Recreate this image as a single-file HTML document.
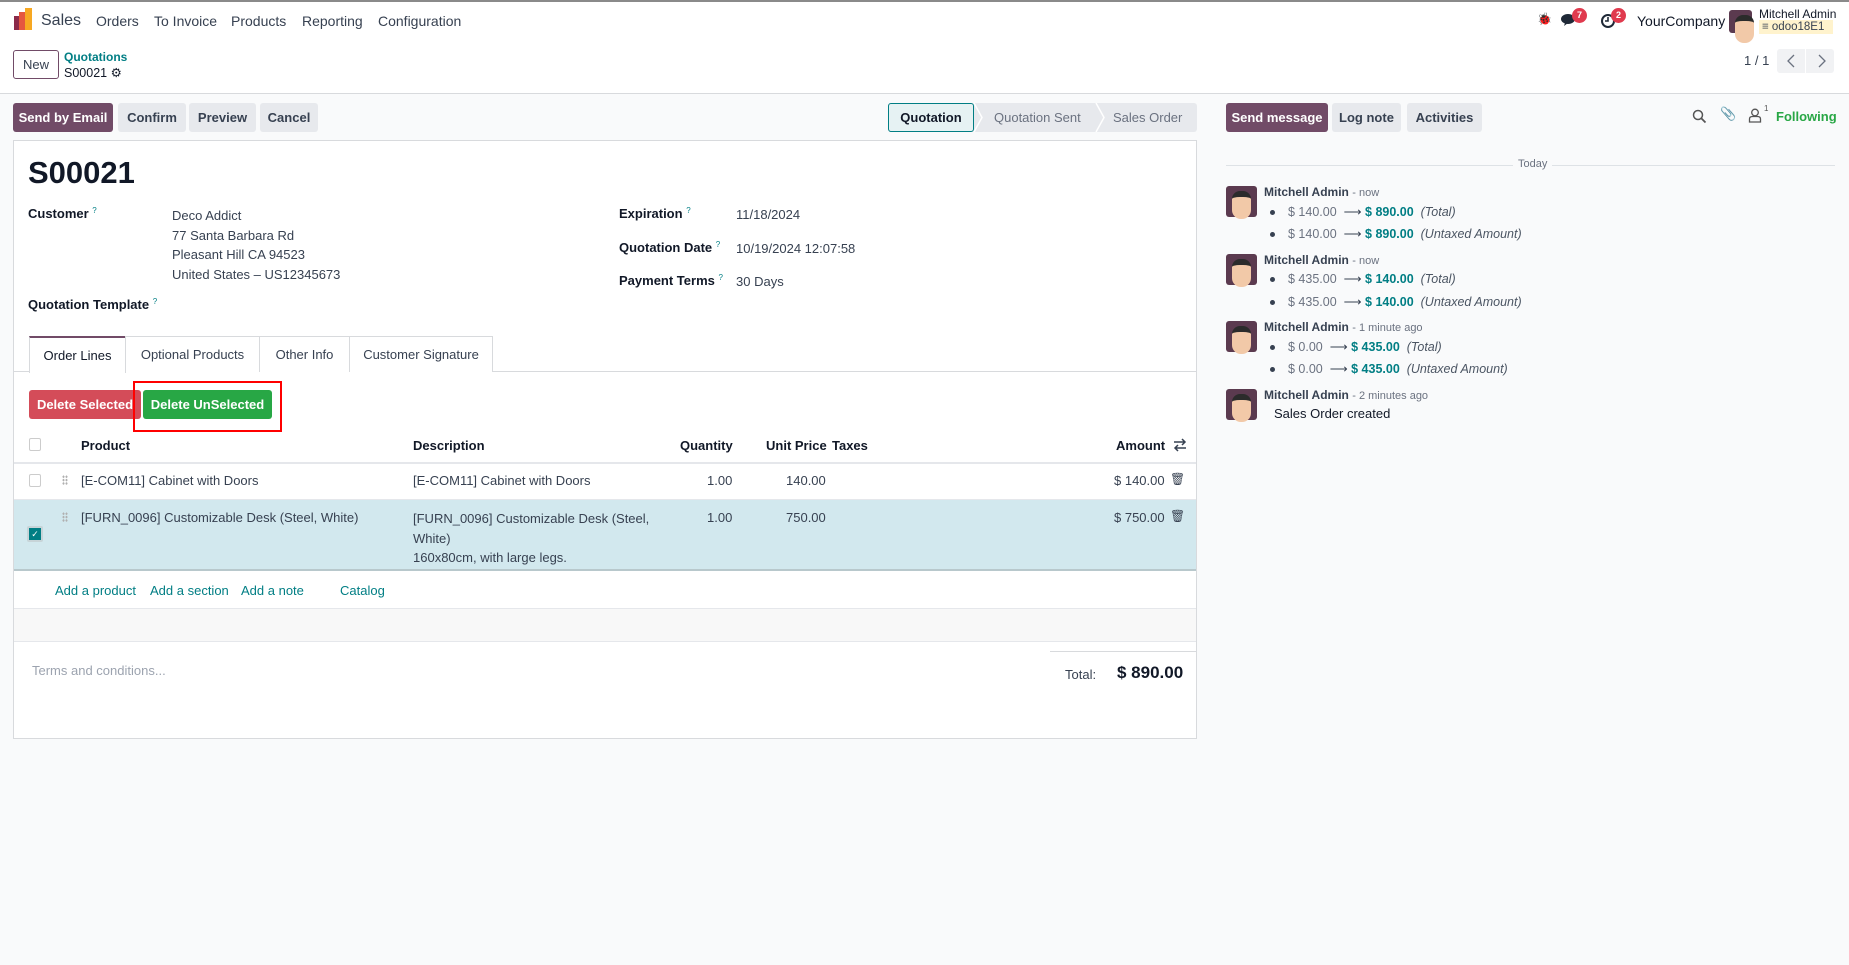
<!DOCTYPE html>
<html><head><meta charset="utf-8"><style>
*{box-sizing:border-box;margin:0;padding:0}
body{width:1849px;height:965px;position:relative;background:#f9fafb;font-family:"Liberation Sans",sans-serif;font-size:13px;color:#374151;overflow:hidden}
.a{position:absolute;white-space:nowrap}
.top{position:absolute;left:0;top:0;width:1849px;height:94px;background:#fff;border-top:2px solid #8a8a8a;border-bottom:1px solid #d8dadd}
.btn{position:absolute;height:29px;line-height:29px;border-radius:3px;background:#e7e9ed;color:#374151;font-weight:bold;text-align:center;font-size:13px}
.pri{background:#714b67;color:#fff}
.lbl{font-weight:bold;color:#111827}
.q{color:#017e84;font-size:8px;vertical-align:top;font-weight:normal}
.link{color:#017e84}
.sheet{position:absolute;left:13px;top:140px;width:1184px;height:599px;background:#fff;border:1px solid #d8dadd}
.tab{position:absolute;top:336px;height:36px;line-height:36px;border:1px solid #d8dadd;border-bottom:none;text-align:center;background:#fff}
.muted{color:#6b7280}
.teal{color:#017e84;font-weight:bold}
.it{font-style:italic;color:#4b5563}
.dot{position:absolute;width:5px;height:5px;border-radius:50%;background:#374151}
.av{position:absolute;left:1226px;width:31px;height:31px;border-radius:3px;background:#5b3a4f}
.av::after{content:"";position:absolute;left:6px;top:5px;width:19px;height:22px;border-radius:8px 8px 9px 9px;background:#f2c9a8;border-top:6px solid #2b2b2b}
.grip{position:absolute;width:6px;height:10px;background-image:radial-gradient(circle,#b0b0b0 1px,transparent 1.2px);background-size:3px 3.4px}
</style></head><body>
<div class="top"></div>
<div class="a" style="left:14px;top:16px;width:6px;height:14px;background:#8b2a4a"></div>
<div class="a" style="left:19px;top:12px;width:6px;height:18px;background:#e5573f"></div>
<div class="a" style="left:25px;top:8px;width:7px;height:22px;background:#f7a822"></div>
<div class="a" style="left:41px;top:12px;font-size:16px;color:#374151">Sales</div>
<div class="a" style="left:96px;top:13px;font-size:14px">Orders</div>
<div class="a" style="left:154px;top:13px;font-size:14px">To Invoice</div>
<div class="a" style="left:231px;top:13px;font-size:14px">Products</div>
<div class="a" style="left:302px;top:13px;font-size:14px">Reporting</div>
<div class="a" style="left:378px;top:13px;font-size:14px">Configuration</div>
<div class="a" style="left:1537px;top:12px;font-size:12px;color:#111">🐞</div>
<svg class="a" style="left:1561px;top:13px" width="16" height="14" viewBox="0 0 16 14"><ellipse cx="7" cy="6" rx="7" ry="5" fill="#1f2937"/><path d="M4 10 L3 13 L7 10Z" fill="#1f2937"/></svg>
<div class="a" style="left:1572px;top:8px;width:15px;height:15px;border-radius:50%;background:#e03a4e;color:#fff;font-size:9px;line-height:15px;text-align:center;font-weight:bold">7</div>
<svg class="a" style="left:1600px;top:13px" width="16" height="16" viewBox="0 0 16 16"><circle cx="8" cy="8" r="6" fill="none" stroke="#1f2937" stroke-width="2"/><path d="M8 4v4h-3" stroke="#1f2937" stroke-width="1.6" fill="none"/></svg>
<div class="a" style="left:1611px;top:8px;width:15px;height:15px;border-radius:50%;background:#e03a4e;color:#fff;font-size:9px;line-height:15px;text-align:center;font-weight:bold">2</div>
<div class="a" style="left:1637px;top:13px;font-size:14px;color:#111827">YourCompany</div>
<div class="av" style="left:1729px;top:10px;width:23px;height:23px"></div>
<div class="a" style="left:1759px;top:7px;font-size:12px;color:#111827">Mitchell Admin</div>
<div class="a" style="left:1759px;top:20px;width:74px;height:14px;background:#fff3cd;font-size:11.5px;line-height:14px;padding-left:3px">≡ odoo18E1</div>
<div class="a" style="left:13px;top:50px;width:46px;height:29px;border:1px solid #714b67;border-radius:3px;text-align:center;line-height:27px;font-size:13px">New</div>
<div class="a link" style="left:64px;top:50px;font-size:12px;font-weight:bold">Quotations</div>
<div class="a" style="left:64px;top:65px;font-size:12.5px;color:#111827">S00021 ⚙</div>
<div class="a" style="left:1744px;top:53px;font-size:13px">1 / 1</div>
<div class="a" style="left:1777px;top:49px;width:28px;height:24px;background:#f1f2f4;border-radius:3px 0 0 3px"></div>
<div class="a" style="left:1806px;top:49px;width:28px;height:24px;background:#f1f2f4;border-radius:0 3px 3px 0"></div>
<svg class="a" style="left:1785px;top:54px" width="44" height="14" viewBox="0 0 44 14"><path d="M9 1 L3 7 L9 13" stroke="#6b7280" fill="none" stroke-width="1.3"/><path d="M34 1 L40 7 L34 13" stroke="#6b7280" fill="none" stroke-width="1.3"/></svg>
<div class="btn pri" style="left:13px;top:103px;width:100px">Send by Email</div>
<div class="btn" style="left:118px;top:103px;width:68px">Confirm</div>
<div class="btn" style="left:189px;top:103px;width:67px">Preview</div>
<div class="btn" style="left:260px;top:103px;width:58px">Cancel</div>
<div class="a" style="left:888px;top:103px;width:309px;height:29px;background:#e7e9ed;border-radius:3px"></div>
<svg class="a" style="left:970px;top:103px" width="140" height="29" viewBox="0 0 140 29"><path d="M4 0 L12 14.5 L4 29" stroke="#fff" fill="none" stroke-width="1.5"/><path d="M126 0 L134 14.5 L126 29" stroke="#fff" fill="none" stroke-width="1.5"/></svg>
<div class="a" style="left:888px;top:103px;width:86px;height:29px;background:#e6f2f3;border:1px solid #017e84;border-radius:3px;text-align:center;line-height:27px;font-weight:bold;color:#111827">Quotation</div>
<div class="a muted" style="left:994px;top:110px">Quotation Sent</div>
<div class="a muted" style="left:1113px;top:110px">Sales Order</div>
<div class="btn pri" style="left:1226px;top:103px;width:102px">Send message</div>
<div class="btn" style="left:1332px;top:103px;width:69px">Log note</div>
<div class="btn" style="left:1407px;top:103px;width:75px">Activities</div>
<svg class="a" style="left:1692px;top:109px" width="15" height="15" viewBox="0 0 15 15"><circle cx="6" cy="6" r="4.5" fill="none" stroke="#555" stroke-width="1.5"/><path d="M9.5 9.5 L13.5 13.5" stroke="#555" stroke-width="1.8"/></svg>
<div class="a" style="left:1720px;top:106px;font-size:13px;color:#555">📎</div>
<svg class="a" style="left:1748px;top:108px" width="14" height="15" viewBox="0 0 14 15"><circle cx="7" cy="4.5" r="3.3" fill="none" stroke="#555" stroke-width="1.3"/><path d="M1.5 14 V11 Q1.5 8.5 4.5 8.5 H9.5 Q12.5 8.5 12.5 11 V14 Z" fill="none" stroke="#555" stroke-width="1.3"/></svg>
<div class="a" style="left:1764px;top:104px;font-size:8px;color:#555">1</div>
<div class="a" style="left:1776px;top:109px;color:#28a745;font-weight:bold">Following</div>
<div class="sheet"></div>
<div class="a" style="left:28px;top:155px;font-size:31px;font-weight:bold;color:#111827">S00021</div>
<div class="a lbl" style="left:28px;top:206px">Customer <span class="q">?</span></div>
<div class="a" style="left:172px;top:206px;line-height:19.5px">Deco Addict<br>77 Santa Barbara Rd<br>Pleasant Hill CA 94523<br>United States – US12345673</div>
<div class="a lbl" style="left:28px;top:297px">Quotation Template <span class="q">?</span></div>
<div class="a lbl" style="left:619px;top:206px">Expiration <span class="q">?</span></div>
<div class="a" style="left:736px;top:207px">11/18/2024</div>
<div class="a lbl" style="left:619px;top:240px">Quotation Date <span class="q">?</span></div>
<div class="a" style="left:736px;top:241px">10/19/2024 12:07:58</div>
<div class="a lbl" style="left:619px;top:273px">Payment Terms <span class="q">?</span></div>
<div class="a" style="left:736px;top:274px">30 Days</div>
<div class="a" style="left:14px;top:371px;width:1182px;height:1px;background:#d8dadd"></div>
<div class="tab" style="left:29px;width:97px;border-top:2px solid #714b67;height:37px;color:#111827">Order Lines</div>
<div class="tab" style="left:125px;width:135px">Optional Products</div>
<div class="tab" style="left:259px;width:91px">Other Info</div>
<div class="tab" style="left:349px;width:144px">Customer Signature</div>
<div class="btn" style="left:29px;top:390px;width:112px;background:#d44c59;color:#fff">Delete Selected</div>
<div class="btn" style="left:143px;top:390px;width:129px;background:#28a745;color:#fff">Delete UnSelected</div>
<div class="a" style="left:133px;top:381px;width:149px;height:51px;border:2px solid #ff0000"></div>
<div class="a" style="left:29px;top:438px;width:12px;height:13px;border:1px solid #ccc;border-radius:2px"></div>
<div class="a lbl" style="left:81px;top:438px">Product</div>
<div class="a lbl" style="left:413px;top:438px">Description</div>
<div class="a lbl" style="left:680px;top:438px">Quantity</div>
<div class="a lbl" style="left:766px;top:438px">Unit Price</div>
<div class="a lbl" style="left:832px;top:438px">Taxes</div>
<div class="a lbl" style="left:1116px;top:438px">Amount</div>
<svg class="a" style="left:1173px;top:438px" width="14" height="14" viewBox="0 0 14 14"><path d="M1 4 H12 M9 1 L12 4 L9 7 M13 10 H2 M5 7 L2 10 L5 13" stroke="#374151" fill="none" stroke-width="1.5"/></svg>
<div class="a" style="left:14px;top:462px;width:1182px;height:2px;background:#e5e7eb"></div>
<div class="a" style="left:29px;top:474px;width:12px;height:13px;border:1px solid #ccc;border-radius:2px"></div>
<div class="grip" style="left:62px;top:475px"></div>
<div class="a" style="left:81px;top:473px">[E-COM11] Cabinet with Doors</div>
<div class="a" style="left:413px;top:473px">[E-COM11] Cabinet with Doors</div>
<div class="a" style="left:707px;top:473px">1.00</div>
<div class="a" style="left:786px;top:473px">140.00</div>
<div class="a" style="left:1114px;top:473px">$ 140.00</div>
<div class="a" style="left:1170px;top:472px;font-size:12px">🗑</div>
<div class="a" style="left:14px;top:499px;width:1182px;height:1px;background:#e5e7eb"></div>
<div class="a" style="left:14px;top:500px;width:1182px;height:71px;background:#d2e8ee;border-bottom:2px solid #b8c8cc"></div>
<div class="a" style="left:27px;top:526px;width:16px;height:16px;background:#c7d4d8;border-radius:2px"></div>
<div class="a" style="left:29px;top:528px;width:12px;height:12px;background:#017e84;color:#fff;font-size:9px;line-height:12px;text-align:center">✓</div>
<div class="grip" style="left:62px;top:512px"></div>
<div class="a" style="left:81px;top:510px">[FURN_0096] Customizable Desk (Steel, White)</div>
<div class="a" style="left:413px;top:509px;line-height:19.5px">[FURN_0096] Customizable Desk (Steel,<br>White)<br>160x80cm, with large legs.</div>
<div class="a" style="left:707px;top:510px">1.00</div>
<div class="a" style="left:786px;top:510px">750.00</div>
<div class="a" style="left:1114px;top:510px">$ 750.00</div>
<div class="a" style="left:1170px;top:509px;font-size:12px">🗑</div>
<div class="a link" style="left:55px;top:583px">Add a product</div>
<div class="a link" style="left:150px;top:583px">Add a section</div>
<div class="a link" style="left:241px;top:583px">Add a note</div>
<div class="a link" style="left:340px;top:583px">Catalog</div>
<div class="a" style="left:14px;top:608px;width:1182px;height:34px;background:#f8f8f8;border-top:1px solid #e5e7eb;border-bottom:1px solid #e5e7eb"></div>
<div class="a" style="left:32px;top:663px;color:#9ca3af;font-size:13px">Terms and conditions...</div>
<div class="a" style="left:1050px;top:651px;width:146px;height:1px;background:#d8dadd"></div>
<div class="a" style="left:1065px;top:667px">Total:</div>
<div class="a" style="left:1117px;top:663px;font-size:17px;font-weight:bold;color:#111827">$ 890.00</div>
<div class="a" style="left:1226px;top:165px;width:609px;height:1px;background:#dee2e6"></div>
<div class="a muted" style="left:1513px;top:158px;background:#f9fafb;padding:0 5px;font-size:11px">Today</div>
<div class="av" style="top:186px"></div>
<div class="a" style="left:1264px;top:185px;font-size:12px"><b style="color:#374151">Mitchell Admin</b> <span class="muted" style="font-size:11px">- now</span></div>
<div class="dot" style="left:1270px;top:210px"></div><div class="a" style="left:1288px;top:204px;font-size:12.5px"><span class="muted">$ 140.00</span> &nbsp;⟶ <span class="teal">$ 890.00</span> &nbsp;<span class="it">(Total)</span></div>
<div class="dot" style="left:1270px;top:232px"></div><div class="a" style="left:1288px;top:226px;font-size:12.5px"><span class="muted">$ 140.00</span> &nbsp;⟶ <span class="teal">$ 890.00</span> &nbsp;<span class="it">(Untaxed Amount)</span></div>
<div class="av" style="top:254px"></div>
<div class="a" style="left:1264px;top:253px;font-size:12px"><b>Mitchell Admin</b> <span class="muted" style="font-size:11px">- now</span></div>
<div class="dot" style="left:1270px;top:277px"></div><div class="a" style="left:1288px;top:271px;font-size:12.5px"><span class="muted">$ 435.00</span> &nbsp;⟶ <span class="teal">$ 140.00</span> &nbsp;<span class="it">(Total)</span></div>
<div class="dot" style="left:1270px;top:300px"></div><div class="a" style="left:1288px;top:294px;font-size:12.5px"><span class="muted">$ 435.00</span> &nbsp;⟶ <span class="teal">$ 140.00</span> &nbsp;<span class="it">(Untaxed Amount)</span></div>
<div class="av" style="top:321px"></div>
<div class="a" style="left:1264px;top:320px;font-size:12px"><b>Mitchell Admin</b> <span class="muted" style="font-size:11px">- 1 minute ago</span></div>
<div class="dot" style="left:1270px;top:345px"></div><div class="a" style="left:1288px;top:339px;font-size:12.5px"><span class="muted">$ 0.00</span> &nbsp;⟶ <span class="teal">$ 435.00</span> &nbsp;<span class="it">(Total)</span></div>
<div class="dot" style="left:1270px;top:367px"></div><div class="a" style="left:1288px;top:361px;font-size:12.5px"><span class="muted">$ 0.00</span> &nbsp;⟶ <span class="teal">$ 435.00</span> &nbsp;<span class="it">(Untaxed Amount)</span></div>
<div class="av" style="top:389px"></div>
<div class="a" style="left:1264px;top:388px;font-size:12px"><b>Mitchell Admin</b> <span class="muted" style="font-size:11px">- 2 minutes ago</span></div>
<div class="a" style="left:1274px;top:406px;color:#111827">Sales Order created</div>
</body></html>
